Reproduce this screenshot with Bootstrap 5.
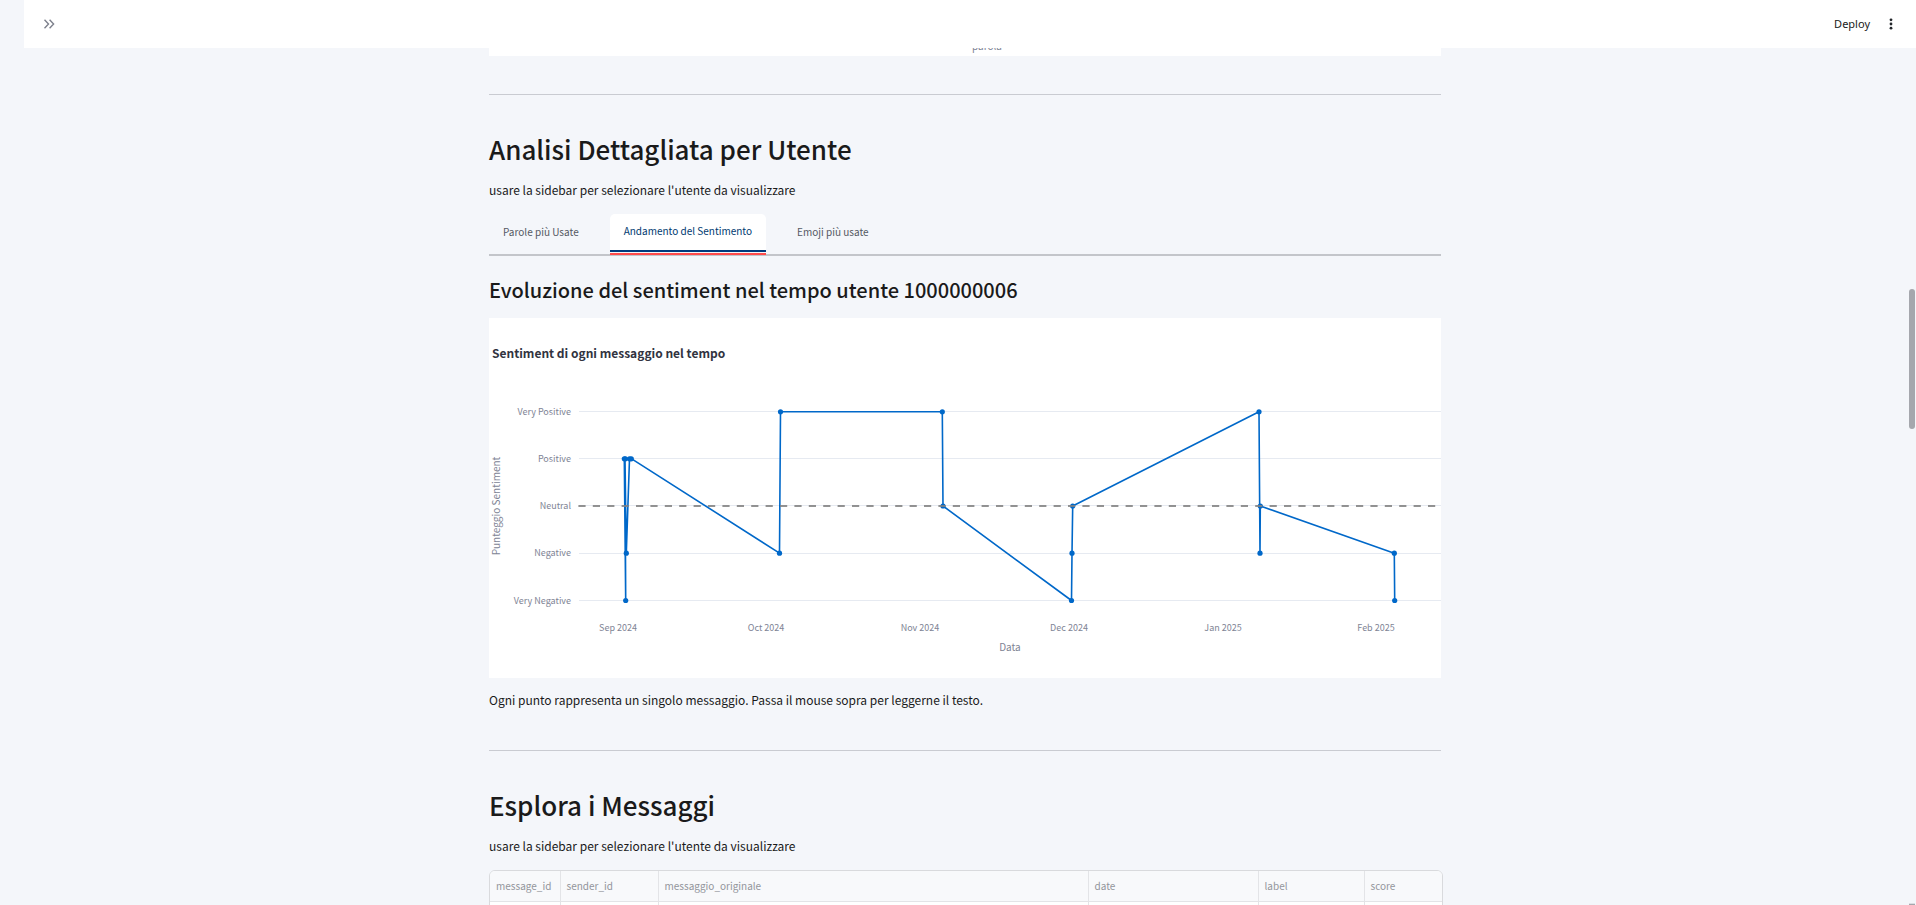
<!DOCTYPE html>
<html lang="it">
<head>
<meta charset="utf-8">
<meta name="viewport" content="width=device-width, initial-scale=1">
<title>Analisi Messaggi</title>
<link rel="stylesheet" href="https://cdn.jsdelivr.net/npm/bootstrap@5.3.0/dist/css/bootstrap.min.css">
<style>
  body { background: #f4f6fa; color: #1a1a1a; font-family: "Noto Sans CJK SC", "Source Sans Pro", sans-serif; font-size: 12px; line-height: 20px; }
  .app-bar { height: 48px; margin-left: 24px; padding: 0 20px; background: #fff; }
  .icon-btn { border: 0; background: none; padding: 0; line-height: 0; color: #7d808c; }
  .deploy-btn { border: 0; background: none; padding: 0; font-family: "Noto Sans", sans-serif; font-size: 11px; color: #1a1a1a; }
  .app-main { padding-left: 24px; padding-right: 10px; min-height: 0; }
  .page-col { max-width: 952px; }
  .prev-chart { height: 8px; background: #fff; padding: 0 0 4px 44px; line-height: 12px; font-size: 10px; color: #808495; }
  .rule { border: 0; border-top: 1px solid #c9cbd1; opacity: 1; margin: 38px 0 32px; }
  h2 { font-size: 26px; font-weight: 500; line-height: 44px; margin: 0 0 9px; }
  h3 { font-size: 20px; font-weight: 500; line-height: 28px; margin: 20px 0 14px; }
  .body-txt { margin: 0 0 14px; }
  .chart-note { margin: 0; padding: 12px 0 2px; }
  .tab-row { border-bottom: 2px solid #c3c5ca; gap: 17px; height: 42px; }
  .tab-row .nav-link { border: 0; background: none; border-radius: 5px 5px 0 0; padding: 0 14px 4px; color: #555963; font-size: 10px; line-height: 34px; height: 39px; }
  .tab-row .nav-link.active { background: #fff; color: #003a70; border-bottom: 2px solid #003a7d; height: 38px; }
  .tab-hold { border-bottom: 2px solid transparent; height: 41px; }
  .tab-hold.on { border-bottom-color: #ff4b4b; }
  .chart-box { background: #fff; }
  .chart-box svg { display: block; width: 100%; height: auto; }
  .tick-txt { font-size: 9px; fill: #808495; }
  .axis-txt { font-size: 10px; fill: #808495; }
  .title-txt { font-size: 12px; font-weight: 700; fill: #31333f; }
  .grid-box { border: 1px solid #d9dadd; border-radius: 6px 6px 0 0; margin-right: -2px; overflow: hidden; background: #fff; }
  .grid-box table { table-layout: fixed; width: 100%; margin: 0; border-collapse: collapse; }
  .grid-box th { font-size: 10px; font-weight: 400; color: #93959b; background: #f8f9fb; height: 30px; padding: 1px 6px 0; border-right: 1px solid #e3e4e7; border-bottom: 1px solid #e3e4e7; }
  .grid-box td { height: 30px; border-right: 1px solid #e3e4e7; }
  .grid-box th:last-child, .grid-box td:last-child { border-right: 0; }
  .scroll-thumb { top: 289px; right: 1px; width: 6px; height: 140px; border-radius: 3px; background: #a5a7ad; }
  .scroll-end { bottom: 0; right: 1px; width: 6px; height: 2px; background: #a5a7ad; border-top: 1px solid #dcdde2; }
</style>
</head>
<body class="vh-100 overflow-hidden d-flex flex-column position-relative">
<header class="app-bar d-flex align-items-center justify-content-between flex-shrink-0">
  <button class="icon-btn" type="button" aria-label="Apri sidebar">
    <svg width="12" height="10" viewBox="0 0 12 10" fill="none" stroke="currentColor" stroke-width="1.4"><path d="M.5.8 4.5 5l-4 4.2M5.6.8l4 4.2-4 4.2"/></svg>
  </button>
  <div class="d-flex align-items-center">
    <button class="deploy-btn" type="button">Deploy</button>
    <button class="icon-btn ms-3 text-dark" type="button" aria-label="Menu">
      <svg width="10" height="12" viewBox="0 0 10 12" fill="currentColor"><circle cx="5" cy="1.8" r="1.4"/><circle cx="5" cy="6" r="1.4"/><circle cx="5" cy="10.2" r="1.4"/></svg>
    </button>
  </div>
</header>
<main class="app-main flex-grow-1 overflow-hidden">
  <div class="page-col mx-auto">
    <div class="prev-chart d-flex align-items-end justify-content-center overflow-hidden"><span>parola</span></div>
    <hr class="rule">
    <h2>Analisi Dettagliata per Utente</h2>
    <p class="body-txt">usare la sidebar per selezionare l'utente da visualizzare</p>
    <ul class="nav tab-row flex-nowrap" role="tablist">
      <li class="tab-hold"><button class="nav-link" type="button" role="tab">Parole più Usate</button></li>
      <li class="tab-hold on"><button class="nav-link active" type="button" role="tab" aria-selected="true">Andamento del Sentimento</button></li>
      <li class="tab-hold"><button class="nav-link" type="button" role="tab">Emoji più usate</button></li>
    </ul>
    <h3>Evoluzione del sentiment nel tempo utente 1000000006</h3>
    <div class="chart-box">
      <svg viewBox="0 0 952 360" role="img" aria-label="Sentiment di ogni messaggio nel tempo">
        <text class="title-txt" x="3" y="40">Sentiment di ogni messaggio nel tempo</text>
        <path d="M90 93.5H952M90 140.5H952M90 187.5H952M90 235.5H952M90 282.5H952" stroke="#e6eaf1" stroke-width="1" fill="none"/>
        <g class="tick-txt" text-anchor="end">
          <text x="82" y="97">Very Positive</text>
          <text x="82" y="144">Positive</text>
          <text x="82" y="191">Neutral</text>
          <text x="82" y="238">Negative</text>
          <text x="82" y="286">Very Negative</text>
        </g>
        <g class="tick-txt" text-anchor="middle">
          <text x="129" y="313">Sep 2024</text>
          <text x="277" y="313">Oct 2024</text>
          <text x="431" y="313">Nov 2024</text>
          <text x="580" y="313">Dec 2024</text>
          <text x="734" y="313">Jan 2025</text>
          <text x="887" y="313">Feb 2025</text>
        </g>
        <g class="axis-txt" text-anchor="middle">
          <text x="521" y="333">Data</text>
          <text transform="translate(11 188) rotate(-90)">Punteggio Sentiment</text>
        </g>
        <path d="M135.3 140.8L136.7 282.5L136 140.8L137.3 235L140.5 140.8H142.7L290.5 235.2L291.5 93.8H453.3L454 188L582.5 282.5L583 235.2L583.7 188L770 93.8L771 235.2L771.3 188L905.3 235.2L905.7 282.5" fill="none" stroke="#0068c9" stroke-width="1.6" stroke-linejoin="round"/>
        <g fill="#0068c9">
          <circle cx="135.3" cy="140.8" r="2.6"/><circle cx="136.4" cy="140.8" r="2.6"/><circle cx="140.5" cy="140.8" r="2.6"/><circle cx="142.3" cy="140.8" r="2.6"/>
          <circle cx="137.3" cy="235.2" r="2.6"/><circle cx="136.7" cy="282.5" r="2.6"/>
          <circle cx="290.5" cy="235.2" r="2.6"/><circle cx="291.5" cy="93.8" r="2.6"/>
          <circle cx="453.3" cy="93.8" r="2.6"/><circle cx="454" cy="188" r="2.6"/>
          <circle cx="582.5" cy="282.5" r="2.6"/><circle cx="583" cy="235.2" r="2.6"/><circle cx="583.7" cy="188" r="2.6"/>
          <circle cx="770" cy="93.8" r="2.6"/><circle cx="771" cy="235.2" r="2.6"/><circle cx="771.3" cy="188" r="2.6"/>
          <circle cx="905.3" cy="235.2" r="2.6"/><circle cx="905.7" cy="282.5" r="2.6"/>
        </g>
        <path d="M89.4 188H952" stroke="#808080" stroke-opacity=".85" stroke-width="2" stroke-dasharray="7.2 7.2" fill="none"/>
      </svg>
    </div>
    <p class="chart-note">Ogni punto rappresenta un singolo messaggio. Passa il mouse sopra per leggerne il testo.</p>
    <hr class="rule">
    <h2>Esplora i Messaggi</h2>
    <p class="body-txt">usare la sidebar per selezionare l'utente da visualizzare</p>
    <div class="grid-box">
      <table>
        <colgroup><col style="width:70px"><col style="width:98px"><col><col style="width:170px"><col style="width:106px"><col style="width:78px"></colgroup>
        <thead><tr><th scope="col">message_id</th><th scope="col">sender_id</th><th scope="col">messaggio_originale</th><th scope="col">date</th><th scope="col">label</th><th scope="col">score</th></tr></thead>
        <tbody><tr><td></td><td></td><td></td><td></td><td></td><td></td></tr></tbody>
      </table>
    </div>
  </div>
</main>
<div class="scroll-thumb position-absolute"></div>
<div class="scroll-end position-absolute"></div>
<script src="https://cdn.jsdelivr.net/npm/bootstrap@5.3.0/dist/js/bootstrap.bundle.min.js"></script>
</body>
</html>
